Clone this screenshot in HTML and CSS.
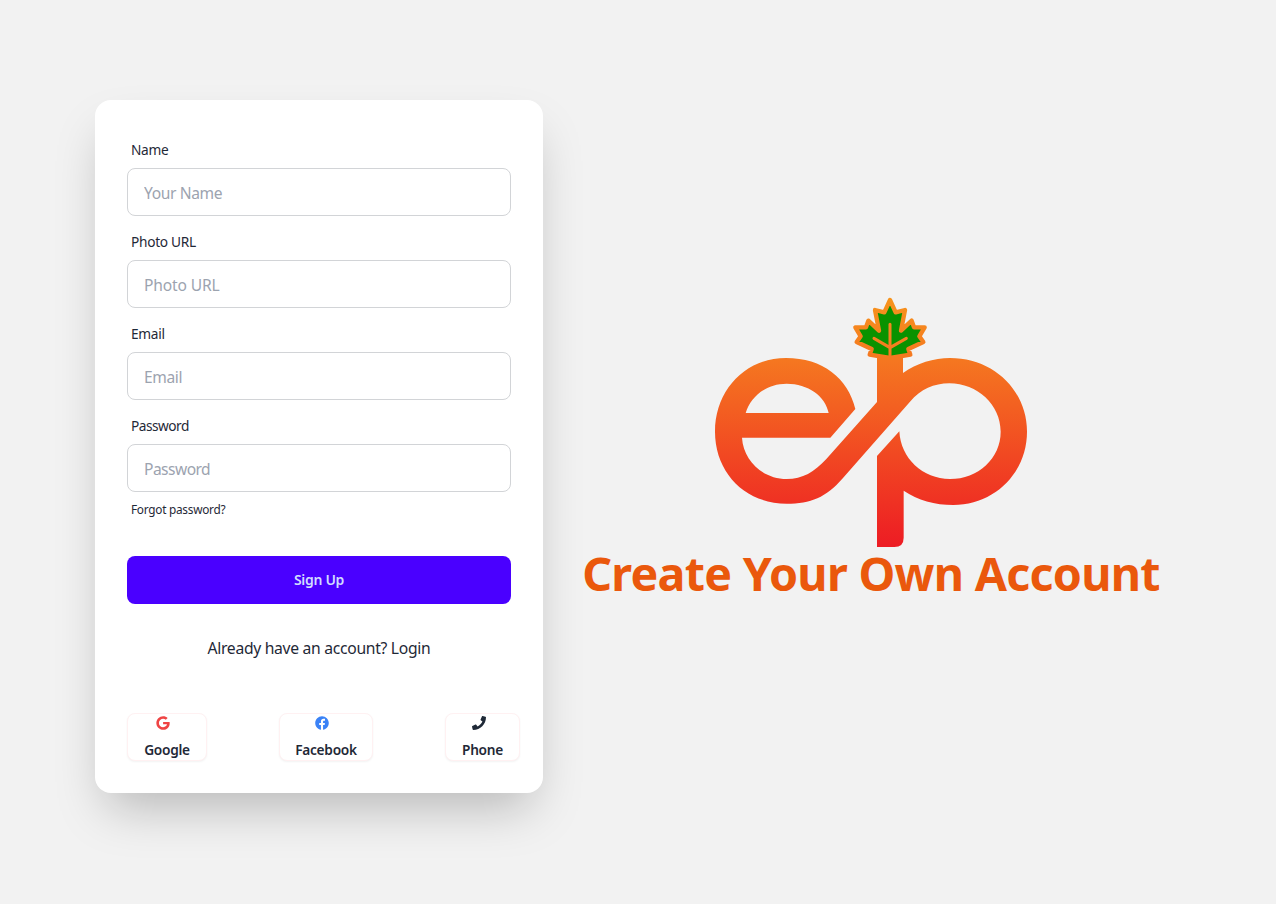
FILE: index.html
```html
<!DOCTYPE html>
<html lang="en">
<head>
<meta charset="utf-8">
<title>Create Your Own Account</title>
<link rel="stylesheet" href="styles.css">
</head>
<body>
<main class="hero">
  <form class="card">
    <div class="field">
      <label class="label" for="name">Name</label>
      <input class="input i-name" id="name" type="text" placeholder="Your Name">
    </div>
    <div class="field">
      <label class="label" for="photo">Photo URL</label>
      <input class="input" id="photo" type="text" placeholder="Photo URL">
    </div>
    <div class="field">
      <label class="label" for="email">Email</label>
      <input class="input i-mail" id="email" type="email" placeholder="Email">
    </div>
    <div class="field">
      <label class="label pass" for="password">Password</label>
      <input class="input i-pass" id="password" type="password" placeholder="Password">
    </div>
    <a class="forgot"><span>Forgot password?</span></a>
    <button class="submit" type="button"><span>Sign Up</span></button>
    <p class="login"><span>Already have an account? Login</span></p>
    <div class="socials">
      <button class="social google" type="button">
        <svg class="icon red" viewBox="0 0 488 512"><path d="M488 261.8C488 403.3 391.1 504 248 504 110.8 504 0 393.2 0 256S110.8 8 248 8c66.8 0 123 24.5 166.3 64.9l-67.5 64.9C258.5 52.6 94.3 116.6 94.3 256c0 86.5 69.1 156.6 153.7 156.6 98.2 0 135-70.4 140.8-106.9H248v-85.3h236.1c2.3 12.7 3.9 24.9 3.9 41.4z"/></svg>
        <span>Google</span>
      </button>
      <button class="social facebook" type="button">
        <svg class="icon blue" viewBox="0 0 512 512"><path d="M504 256C504 119 393 8 256 8S8 119 8 256c0 123.78 90.69 226.38 209.25 245V327.69h-63V256h63v-54.64c0-62.15 37-96.48 93.67-96.48 27.14 0 55.52 4.84 55.52 4.84v61h-31.28c-30.8 0-40.41 19.12-40.41 38.73V256h68.78l-11 71.69h-57.78V501C413.31 482.38 504 379.78 504 256z"/></svg>
        <span>Facebook</span>
      </button>
      <button class="social phone" type="button">
        <svg class="icon" viewBox="0 0 512 512"><path d="M493.4 24.6l-104-24c-11.3-2.6-22.9 3.3-27.5 13.9l-48 112c-4.2 9.8-1.4 21.3 6.9 28l60.6 49.6c-36 76.7-98.9 140.5-177.2 177.2l-49.6-60.6c-6.8-8.3-18.2-11.1-28-6.9l-112 48C3.9 366.5-2 378.1.6 389.4l24 104C27.1 504.2 36.7 512 48 512c256.1 0 464-207.5 464-464 0-11.2-7.7-20.9-18.6-23.4z"/></svg>
        <span>Phone</span>
      </button>
    </div>
  </form>
  <section class="brand">
    <svg class="logo" viewBox="45 21 936 753">
      <defs>
        <linearGradient id="flame" gradientUnits="userSpaceOnUse" x1="0" y1="24" x2="0" y2="771">
          <stop offset="0" stop-color="#f7941d"/>
          <stop offset=".24" stop-color="#f57820"/>
          <stop offset=".83" stop-color="#ef3023"/>
          <stop offset="1" stop-color="#ed1c24"/>
        </linearGradient>
      </defs>
      <path fill="url(#flame)" fill-rule="evenodd" d="M391 443H126C130 512 189 567 260 567C308 567 343 546 379 507L531 336V200H609V249C650 220 702 204 750 204C882 204 981 302 981 425C981 548 884 645 760 645C705 645 653 630 611 602V743Q611 771 583 771H531V498L598 424C602 505 668 567 750 567C834 567 902 505 902 425C902 344 832 280 748 280C702 280 662 298 630 335L427 566C378 622 333 641 260 641C136 641 45 548 45 425C45 301 136 204 258 204C368 204 444 264 466 357ZM137 369H386C376 318 324 281 260 281C199 281 152 319 137 369Z"/>
      <path fill="#0a9200" stroke="url(#flame)" stroke-width="13" stroke-linejoin="round" d="M570 30L587 67L615 60L603 122L635 92L642 112L674 112L658 139L670 156L625 177L631 194L570 204L509 194L515 177L470 156L482 139L466 112L498 112L505 92L537 122L525 60L553 67Z"/>
      <path fill="none" stroke="url(#flame)" stroke-width="9" stroke-linecap="round" d="M570 103V205M522 145L570 173L619 145"/>
    </svg>
    <h1 class="title"><span>Create Your Own Account</span></h1>
  </section>
</main>
</body>
</html>
```
FILE: styles.css
```css
* { box-sizing: border-box; }
body {
  margin: 0;
  background: #f2f2f2;
  color: #1f2937;
  font-family: "Noto Sans", "Open Sans", sans-serif;
  font-size: 16px;
  line-height: 24px;
}
.hero {
  display: flex;
  align-items: flex-start;
  gap: 40px;
  height: 904px;
  padding: 100px 0 0 95px;
}
.card {
  display: flex;
  flex-direction: column;
  width: 448px;
  height: 693px;
  padding: 32px;
  border-radius: 16px;
  background: #fff;
  box-shadow: 0 25px 50px -12px rgb(0 0 0 / .25);
}
.field { display: flex; flex-direction: column; height: 92px; }
.label {
  height: 36px;
  padding: 8px 4px;
  font-size: 13.7px;
  line-height: 20px;
  letter-spacing: -.28px;
}
.pass { letter-spacing: -.5px; }
.input {
  width: 100%;
  height: 48px;
  padding: 1px 16px 0;
  border: 1px solid #d2d4d7;
  border-radius: 8px;
  background: #fff;
  font: 15.6px/24px "Noto Sans", sans-serif;
  letter-spacing: -.15px;
}
.i-name { letter-spacing: -.37px; }
.i-mail { letter-spacing: -.4px; }
.i-pass { letter-spacing: -.55px; }
.input::placeholder { color: #9ca3af; opacity: 1; }
.forgot {
  height: 32px;
  padding: 1px 4px;
  font-size: 11.8px;
  line-height: 16px;
  letter-spacing: -.25px;
}
.submit {
  height: 48px;
  margin-top: 24px;
  border: 0;
  border-radius: 8px;
  background: #4a00ff;
  color: #d1dbff;
  font: 600 14px/20px "Noto Sans", sans-serif;
  letter-spacing: -.3px;
}
.login {
  margin: 32px 0 0;
  font-size: 15.7px;
  text-align: center;
  letter-spacing: -.3px;
}
.socials { display: flex; gap: 72px; margin-top: 53px; }
.social {
  display: flex;
  flex: none;
  flex-direction: column;
  align-items: center;
  gap: 10px;
  height: 48px;
  padding: 2px 0 0;
  border: 1px solid #fff1f2;
  border-radius: 8px;
  background: #fff;
  box-shadow: 0 1px 2px rgb(0 0 0 / .05);
  color: #1f2937;
  font: 600 13.7px/20px "Noto Sans", sans-serif;
  letter-spacing: -.27px;
  white-space: nowrap;
}
.google { width: 80px; }
.facebook { width: 94px; }
.phone { width: 75px; }
.icon { width: 14px; height: 14px; margin-right: 8px; fill: currentColor; }
.red { color: #ef4444; }
.blue { color: #3b82f6; }
.brand {
  display: flex;
  flex-direction: column;
  align-items: center;
  width: 576px;
  padding-top: 197px;
}
.logo { width: 312px; height: 251px; }
.title {
  margin: 1px 0 0;
  color: #ea580c;
  font-size: 46.6px;
  font-weight: 700;
  line-height: 48px;
  letter-spacing: -.72px;
  white-space: nowrap;
}
```
